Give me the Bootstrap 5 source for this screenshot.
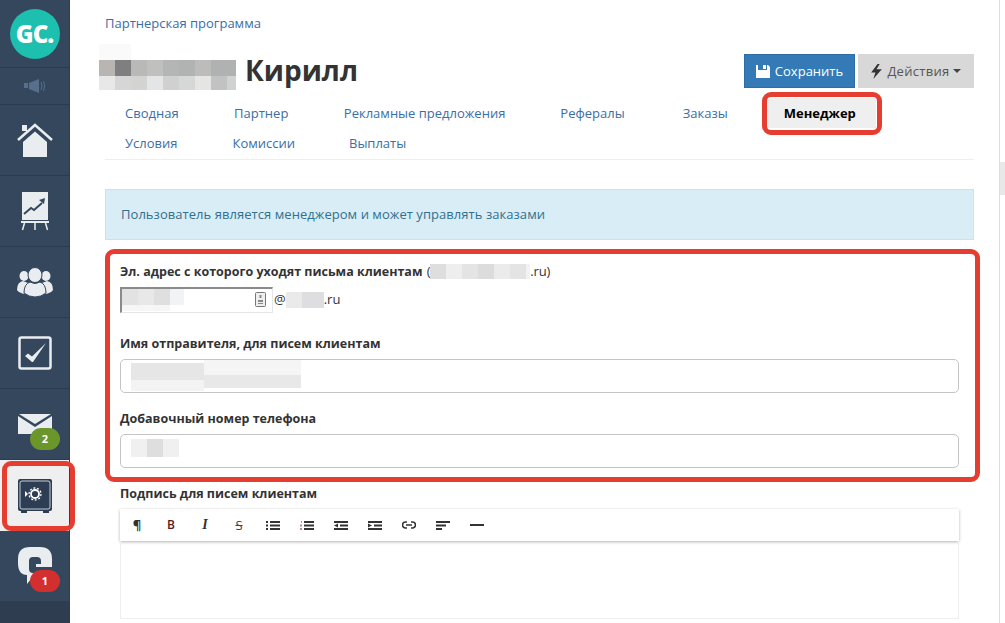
<!DOCTYPE html>
<html lang="ru">
<head>
<meta charset="utf-8">
<title>Менеджер</title>
<link rel="stylesheet" href="https://cdn.jsdelivr.net/npm/bootstrap@5.3.0/dist/css/bootstrap.min.css">
<style>
html,body{height:623px;overflow:hidden;background:#fff}
body{font-family:"Open Sans","Noto Sans",sans-serif;font-size:13px;color:#333}
.shell{height:623px;position:relative}
.rail{width:70px;background:#34475d;border-right:1px solid #2d3d50;flex:none}
.rail-row{height:71px;border-bottom:1px solid #2b3b4e;position:relative}
.rail-logo{height:68px}
.logo-disc{width:50px;height:50px;border-radius:50%;background:#1dbfae;color:#fff;font-weight:800;font-size:24px;letter-spacing:-1px}
.rail-sound{height:37px}
.rail-active{background:#efefef;border-bottom:0}
.rail-last{border-bottom:0;height:70px}
.rail-foot{flex:1;background:#2e3d50}
.pill{position:absolute;left:30px;width:30px;height:22px;border-radius:11px;color:#fff;font-weight:700;font-size:11px}
.pill-green{top:39px;background:#6b962a}
.pill-red{top:39px;background:#d32f2f}
.page{padding:0 25px 0 35px;min-width:0}
.crumb{height:44px;padding-top:15px;color:#3a6ea5;font-size:13px;line-height:17px}
.head-row{height:45px}
.name-blur{display:block;margin-left:-6px;margin-right:9px}
.person{font-size:28px;font-weight:700;color:#333;line-height:1;margin:6px 0 0}
.act-group{padding-top:10px}
.act-btn{height:34px;font-size:13px;border-radius:0;padding:0;line-height:32px}
.act-save{width:111px;background:#337ab7;border:1px solid #2e6da4;color:#fff;gap:5px}
.act-more{width:116px;background:#d8d8d8;border:1px solid #d8d8d8;color:#555;margin-left:3px;gap:5px;letter-spacing:.3px}
.caret-mark{display:inline-block;border-top:4px solid #444;border-left:4px solid transparent;border-right:4px solid transparent;margin-left:-2px}
.tabs-wrap{border-bottom:1px solid #eee;height:71px;padding-top:9px}
.tab-link{display:block;height:30px;line-height:30px;padding:0 20px;margin-right:15px;color:#3a6ea5;white-space:nowrap;font-size:13px;text-decoration:none}
.tab-link:nth-child(1),.tab-link:nth-child(2){margin-right:15.500px}
.tab-link:nth-child(4){margin-right:18px}
.tab-link:nth-child(5){margin-right:16px}
.tab-link:nth-child(8){margin-right:14px}
.tab-on{background:#efefef;color:#000;font-weight:700}
.note{margin:29px 0 0;height:51px;background:#d9edf7;border:1px solid #bce8f1;color:#31708f;padding:0 15px;border-radius:0;line-height:49px;font-size:13px;letter-spacing:.05px}
.form-zone{padding:0 15px}
.lab{font-weight:700;color:#333;font-size:12.500px;line-height:17px;margin:0;display:block}
.lab-a{margin-top:23px}
.lab-b{margin-top:22px}
.lab-c{margin-top:17px}
.lab-d{margin-top:17px}
.lab-note{font-weight:400;font-size:13px;margin-left:1px;letter-spacing:-.2px}
.lab-note svg{vertical-align:-3px}
.mail-row{margin-top:7px;height:26px;gap:1px}
.mail-box{width:153px;height:26px;border:1px solid #e6e6e6;border-top:2px solid #8a8a8a;border-left:2px solid #8a8a8a;background:#fff;position:relative;overflow:hidden}
.blur-pic{display:block}
.card-chip{position:absolute;right:6px;top:3px}
.field-box{height:34px;border:1px solid #c4c4c4;border-radius:5px;padding:0 10px;margin-top:7px;background:#fff;overflow:hidden}
.bar-tools{margin-top:7px;height:32px;background:#fff;box-shadow:0 1px 3px rgba(0,0,0,.3)}
.bar-btn{width:34px;height:32px;color:#333;font-size:13px;line-height:1}
.glyph-b{font-weight:600;color:#5a1a1a;font-size:12px}
.glyph-i{font-family:"Liberation Serif",serif;font-style:italic;font-weight:700;font-size:14px}
.glyph-s{text-decoration:line-through;color:#444;font-size:13px}
.edit-area{height:78px;border:1px solid #eee;border-top:0}
.scroll-rail{width:6px;flex:none;border-left:1px solid #ddd;padding-top:162px;background:#fff}
.scroll-thumb{height:33px;background:#e8e8e8}
.mark-out{position:absolute;border:5px solid #e53e30;border-radius:9px;pointer-events:none}
.mark-tab{left:762px;top:92px;width:120px;height:43px}
.mark-form{left:105px;top:249px;width:875px;height:233px}
.mark-rail{left:2px;top:461px;width:73px;height:70px}
</style>
</head>
<body>
<div class="shell d-flex">
  <nav class="rail d-flex flex-column">
    <div class="rail-row rail-logo d-flex align-items-center justify-content-center"><div class="logo-disc d-flex align-items-center justify-content-center">GC.</div></div>
    <div class="rail-row rail-sound d-flex align-items-center justify-content-center">
      <svg width="22" height="16" viewBox="0 0 22 16"><path d="M0 5h4v5H0zM5 5l10-4v14L5 11z" fill="#566f8c"/><path d="M17 4q2 4 0 8M19.500 3q2.500 5 0 10" fill="none" stroke="#566f8c"/></svg>
    </div>
    <div class="rail-row d-flex align-items-center justify-content-center">
      <svg width="36" height="34" viewBox="0 0 36 34"><path d="M5 2h5v6H5z" fill="#e9edf0"/><path d="M1 17 18 2l17 15" fill="none" stroke="#e9edf0" stroke-width="2.500"/><path d="M6 19 18 8.500 30 19v15H6z" fill="#e9edf0"/></svg>
    </div>
    <div class="rail-row d-flex align-items-center justify-content-center">
      <svg width="30" height="40" viewBox="0 0 30 40"><path d="M2 1h26v28H2z" fill="#e9edf0"/><path d="M1 30h28v2H1z" fill="#e9edf0"/><path d="M4 23l7-6 3 2 8-7" fill="none" stroke="#34475d" stroke-width="2"/><path d="M19 9l6-2-1 6z" fill="#34475d"/><path d="M4.500 32l-2 7M15 32v7M25.500 32l2 7" stroke="#e9edf0" stroke-width="1.500"/></svg>
    </div>
    <div class="rail-row d-flex align-items-center justify-content-center">
      <svg width="36" height="30" viewBox="0 0 36 30"><ellipse cx="7" cy="9" rx="4.500" ry="5" fill="#e9edf0"/><ellipse cx="29" cy="9" rx="4.500" ry="5" fill="#e9edf0"/><path d="M0 23q0-8 6-9l5 2-3 11q-6-1-8-4zM36 23q0-8-6-9l-5 2 3 11q6-1 8-4z" fill="#e9edf0"/><ellipse cx="18" cy="8" rx="7" ry="7.500" fill="#e9edf0" stroke="#34475d"/><path d="M7 26q0-9 6-11 5 3 10 0 6 2 6 11-5 4-11 4T7 26z" fill="#e9edf0" stroke="#34475d"/></svg>
    </div>
    <div class="rail-row d-flex align-items-center justify-content-center">
      <svg width="34" height="34" viewBox="0 0 34 34"><rect x="1.500" y="1.500" width="31" height="31" rx="2" fill="none" stroke="#e9edf0" stroke-width="2.500"/><path d="M7 20l3-2.500 4 3L28 7 15 26h-1z" fill="#e9edf0"/></svg>
    </div>
    <div class="rail-row d-flex align-items-center justify-content-center">
      <svg width="34" height="20" viewBox="0 0 34 20"><path d="M1 0h32L17 10z" fill="#e9edf0"/><path d="M0 2l17 11L34 2v18H0z" fill="#e9edf0"/></svg>
      <span class="pill pill-green d-flex align-items-center justify-content-center">2</span>
    </div>
    <div class="rail-row rail-active d-flex align-items-center justify-content-center">
      <svg width="34" height="34" viewBox="0 0 34 34"><rect width="34" height="32" rx="2" fill="#2d3e54"/><rect x="2" y="2" width="30" height="28" rx="2" fill="none" stroke="#e9edf0" stroke-width=".8"/><path d="M3 32h6v2H3zM25 32h6v2h-6z" fill="#2d3e54"/><circle cx="17" cy="15" r="4" fill="none" stroke="#fff" stroke-width="1.800"/><circle cx="17" cy="15" r="6" fill="none" stroke="#fff" stroke-width="1.300" stroke-dasharray="2 1.700"/><path d="M7 12l3 3-3 3z" fill="#fff"/></svg>
    </div>
    <div class="rail-row rail-last d-flex align-items-center justify-content-center">
      <svg width="34" height="38" viewBox="0 0 34 38"><path d="M12 0h10q12 0 12 12v8H18v-3h5v-3q0-4-4-4h-4q-4 0-4 4v8q0 4 4 4h3l-9 11v-9Q0 28 0 16v-4Q0 0 12 0z" fill="#e9edf0"/></svg>
      <span class="pill pill-red d-flex align-items-center justify-content-center">1</span>
    </div>
    <div class="rail-foot"></div>
  </nav>

  <main class="page flex-grow-1">
    <div class="crumb">Партнерская программа</div>
    <div class="head-row d-flex align-items-start justify-content-between">
      <div class="d-flex align-items-center">
        <svg class="name-blur" width="137" height="46" viewBox="0 0 137 46" shape-rendering="crispEdges"><rect width="32" height="16" fill="#fafafa"/><rect y="16" width="16" height="16" fill="#b8b5b3"/><rect x="16" y="16" width="16" height="16" fill="#7f7f82"/><rect x="32" y="16" width="16" height="16" fill="#b9b9b7"/><rect x="48" y="16" width="16" height="16" fill="#c0c0be"/><rect x="64" y="16" width="16" height="16" fill="#b4b5b5"/><rect x="80" y="16" width="16" height="16" fill="#b1b2b2"/><rect x="96" y="16" width="16" height="16" fill="#bcbcba"/><rect x="112" y="16" width="25" height="16" fill="#b0b1b1"/><rect y="32" width="16" height="14" fill="#e8e8e8"/><rect x="16" y="32" width="16" height="14" fill="#d6d6d6"/><rect x="32" y="32" width="16" height="14" fill="#d3d3d1"/><rect x="48" y="32" width="16" height="14" fill="#e3e5e6"/><rect x="64" y="32" width="16" height="14" fill="#d0d0d0"/><rect x="80" y="32" width="16" height="14" fill="#d6d8d8"/><rect x="96" y="32" width="16" height="14" fill="#e5e5e3"/><rect x="112" y="32" width="16" height="14" fill="#c2c2c2"/><rect x="128" y="32" width="9" height="14" fill="#d0d2d2"/></svg>
        <h1 class="person">Кирилл</h1>
      </div>
      <div class="d-flex act-group">
        <button class="btn act-btn act-save d-flex align-items-center justify-content-center" type="button">
          <svg width="14" height="14" viewBox="0 0 14 14"><path d="M0 1h2v5h9V1h1l2 2v11H0zM7 1h3v4H7z" fill="#fff"/></svg>Сохранить</button>
        <button class="btn act-btn act-more d-flex align-items-center justify-content-center" type="button">
          <svg width="11" height="15" viewBox="0 0 10 14"><path d="M6 0 0 8h4l-2 6 8-9H5l3-5z" fill="#333"/></svg>Действия<span class="caret-mark"></span></button>
      </div>
    </div>
    <div class="tabs-wrap d-flex flex-wrap align-content-start">
      <a class="tab-link" href="#">Сводная</a>
      <a class="tab-link" href="#">Партнер</a>
      <a class="tab-link" href="#">Рекламные предложения</a>
      <a class="tab-link" href="#">Рефералы</a>
      <a class="tab-link" href="#">Заказы</a>
      <a class="tab-link tab-on" href="#">Менеджер</a>
      <a class="tab-link" href="#">Условия</a>
      <a class="tab-link" href="#">Комиссии</a>
      <a class="tab-link" href="#">Выплаты</a>
    </div>
    <div class="note">Пользователь является менеджером и может управлять заказами</div>
    <div class="form-zone">
      <span class="lab lab-a">Эл. адрес с которого уходят письма клиентам <span class="lab-note">(<svg width="100" height="15" viewBox="0 0 100 15" shape-rendering="crispEdges"><rect width="100" height="15" fill="#e4e4e4"/><rect width="16" height="15" fill="#dedede"/><rect x="16" width="16" height="15" fill="#eeeeee"/><rect x="48" width="16" height="15" fill="#dcdcdc"/><rect x="64" width="16" height="15" fill="#ebebeb"/><rect x="96" width="4" height="15" fill="#f2f2f2"/></svg>.ru)</span></span>
      <div class="mail-row d-flex align-items-center">
        <div class="mail-box">
          <svg class="blur-pic" width="62" height="24" viewBox="0 0 62 24" shape-rendering="crispEdges"><rect width="16" height="16" fill="#e2e2e2"/><rect x="16" width="16" height="16" fill="#e8e8e8"/><rect x="32" width="16" height="16" fill="#dfdfdf"/><rect x="48" width="14" height="16" fill="#f2f3f4"/><rect y="16" width="48" height="6" fill="#f6f6f6"/></svg>
          <svg class="card-chip" width="11" height="15" viewBox="0 0 11 15"><rect x=".5" y=".5" width="10" height="14" rx="1" fill="#eee" stroke="#777"/><path d="M4.500 3h2v3h-2zM3 8h5v2H3zM3 11h5v1H3z" fill="#888"/></svg>
        </div>
        <span class="ms-0">@<svg width="38" height="16" viewBox="0 0 38 16" shape-rendering="crispEdges" class="align-text-bottom"><rect width="16" height="16" fill="#eaeaea"/><rect x="16" width="22" height="16" fill="#dedee0"/></svg>.ru</span>
      </div>
      <label class="lab lab-b">Имя отправителя, для писем клиентам</label>
      <div class="field-box"><svg width="170" height="32" viewBox="0 0 170 32" shape-rendering="crispEdges"><rect y="3" width="73" height="17" fill="#e6e6e6"/><rect x="73" width="97" height="15" fill="#f5f5f5"/><rect y="20" width="73" height="11" fill="#f3f3f3"/><rect x="73" y="15" width="97" height="13" fill="#e8e8e8"/></svg></div>
      <label class="lab lab-c">Добавочный номер телефона</label>
      <div class="field-box"><svg width="48" height="30" viewBox="0 0 48 30" shape-rendering="crispEdges"><rect y="4" width="16" height="18" fill="#f0f0f0"/><rect x="16" y="4" width="16" height="18" fill="#dedede"/><rect x="32" y="4" width="16" height="18" fill="#f0f0f0"/></svg></div>
      <label class="lab lab-d">Подпись для писем клиентам</label>
      <div class="bar-tools d-flex align-items-center">
        <span class="bar-btn d-flex align-items-center justify-content-center fw-bold">¶</span>
        <span class="bar-btn d-flex align-items-center justify-content-center glyph-b">B</span>
        <span class="bar-btn d-flex align-items-center justify-content-center glyph-i">I</span>
        <span class="bar-btn d-flex align-items-center justify-content-center glyph-s">S</span>
        <span class="bar-btn d-flex align-items-center justify-content-center"><svg width="14" height="9" viewBox="0 0 14 9"><path d="M0 0h2v2H0zM0 3.500h2v2H0zM0 7h2v2H0zM4 0h10v2H4zM4 3.500h10v2H4zM4 7h10v2H4z" fill="#333"/></svg></span>
        <span class="bar-btn d-flex align-items-center justify-content-center"><svg width="14" height="9" viewBox="0 0 14 9"><path d="M1 0h1v2H1zM0 3.500h2v2H0zM0 7h2v2H0z" fill="#b88"/><path d="M4 0h10v2H4zM4 3.500h10v2H4zM4 7h10v2H4z" fill="#333"/></svg></span>
        <span class="bar-btn d-flex align-items-center justify-content-center"><svg width="14" height="9" viewBox="0 0 14 9"><path d="M0 0h14v2H0zM6 3.500h8v2H6zM0 7h14v2H0zM4 2.500v4L0 4.500z" fill="#333"/></svg></span>
        <span class="bar-btn d-flex align-items-center justify-content-center"><svg width="14" height="9" viewBox="0 0 14 9"><path d="M0 0h14v2H0zM6 3.500h8v2H6zM0 7h14v2H0zM0 2.500v4l4-2z" fill="#333"/></svg></span>
        <span class="bar-btn d-flex align-items-center justify-content-center"><svg width="14" height="8" viewBox="0 0 14 8"><path d="M5 1H3.500a3 3 0 0 0 0 6H5M9 1h1.500a3 3 0 0 1 0 6H9M4 4h6" fill="none" stroke="#333" stroke-width="1.600"/></svg></span>
        <span class="bar-btn d-flex align-items-center justify-content-center"><svg width="14" height="9" viewBox="0 0 14 9"><path d="M0 0h14v2H0zM0 3.500h10v2H0zM0 7h6v2H0z" fill="#333"/></svg></span>
        <span class="bar-btn d-flex align-items-center justify-content-center"><svg width="14" height="2" viewBox="0 0 14 2"><path d="M0 0h14v2H0z" fill="#333"/></svg></span>
      </div>
      <div class="edit-area"></div>
    </div>
  </main>
  <div class="scroll-rail"><div class="scroll-thumb"></div></div>
  <div class="mark-out mark-tab"></div>
  <div class="mark-out mark-form"></div>
  <div class="mark-out mark-rail"></div>
</div>
<script src="https://cdn.jsdelivr.net/npm/bootstrap@5.3.0/dist/js/bootstrap.bundle.min.js"></script>
</body>
</html>
